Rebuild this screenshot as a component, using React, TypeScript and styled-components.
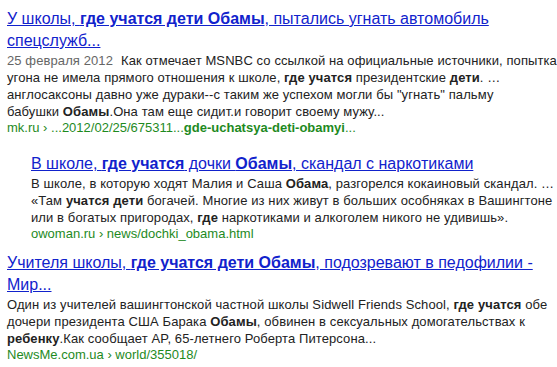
import styled, { createGlobalStyle } from "styled-components";

const GlobalStyle = createGlobalStyle`
    html, body {
        margin: 0;
        padding: 0;
        background: #ffffff;
        overflow: hidden;
    }
    body {
        font-family: "Liberation Sans", Arial, sans-serif;
    }
`;

const Wrapper = styled.div`
    width: 557px;
    height: 367px;
    overflow: hidden;
    padding: 8px 0 0 7px;
    box-sizing: border-box;
    display: flex;
    flex-direction: column;
    gap: 10px;
`;

const Result = styled.div<{ $indent?: boolean }>`
    display: flex;
    flex-direction: column;
    padding-left: ${(props) => (props.$indent ? "24px" : "0")};
    margin-top: ${(props) => (props.$indent ? "7px" : "0")};
`;

const Title = styled.a`
    display: block;
    font-size: 16px;
    line-height: 22px;
    color: #1122cc;
    text-decoration: underline;
    white-space: nowrap;
    b {
        font-weight: bold;
    }
`;

const Snippet = styled.div`
    font-size: 13px;
    line-height: 17px;
    color: #222222;
    white-space: nowrap;
    letter-spacing: 0.1px;
`;

const Line = styled.div``;

const Date = styled.span`
    color: #666666;
    margin-right: 8px;
`;

const Url = styled.div`
    font-size: 13px;
    line-height: 16px;
    color: #1e8a1e;
    white-space: nowrap;
`;

function App() {
    return (
        <>
            <GlobalStyle />
            <Wrapper>
                <Result>
                    <Title>
                        У школы, <b>где учатся дети Обамы</b>, пытались угнать автомобиль
                        <br />
                        спецслужб...
                    </Title>
                    <Snippet>
                        <Line>
                            <Date>25 февраля 2012</Date>Как отмечает MSNBC со ссылкой на официальные источники, попытка
                        </Line>
                        <Line>
                            угона не имела прямого отношения к школе, <b>где учатся</b> президентские <b>дети</b>. …
                        </Line>
                        <Line>
                            англосаксоны давно уже дураки--с таким же успехом могли бы "угнать" пальму
                        </Line>
                        <Line>
                            бабушки <b>Обамы</b>.Она там еще сидит.и говорит своему мужу...
                        </Line>
                    </Snippet>
                    <Url>
                        mk.ru › ...2012/02/25/675311...<b>gde-uchatsya-deti-obamyi</b>...
                    </Url>
                </Result>
                <Result $indent>
                    <Title>
                        В школе, <b>где учатся</b> дочки <b>Обамы</b>, скандал с наркотиками
                    </Title>
                    <Snippet>
                        <Line>
                            В школе, в которую ходят Малия и Саша <b>Обама</b>, разгорелся кокаиновый скандал. …
                        </Line>
                        <Line>
                            «Там <b>учатся дети</b> богачей. Многие из них живут в больших особняках в Вашингтоне
                        </Line>
                        <Line>
                            или в богатых пригородах, <b>где</b> наркотиками и алкоголем никого не удивишь».
                        </Line>
                    </Snippet>
                    <Url>owoman.ru › news/dochki_obama.html</Url>
                </Result>
                <Result>
                    <Title>
                        Учителя школы, <b>где учатся дети Обамы</b>, подозревают в педофилии -
                        <br />
                        Мир...
                    </Title>
                    <Snippet>
                        <Line>
                            Один из учителей вашингтонской частной школы Sidwell Friends School, <b>где учатся</b> обе
                        </Line>
                        <Line>
                            дочери президента США Барака <b>Обамы</b>, обвинен в сексуальных домогательствах к
                        </Line>
                        <Line>
                            <b>ребенку</b>.Как сообщает AP, 65-летнего Роберта Питерсона...
                        </Line>
                    </Snippet>
                    <Url>NewsMe.com.ua › world/355018/</Url>
                </Result>
            </Wrapper>
        </>
    );
}

export default App;
